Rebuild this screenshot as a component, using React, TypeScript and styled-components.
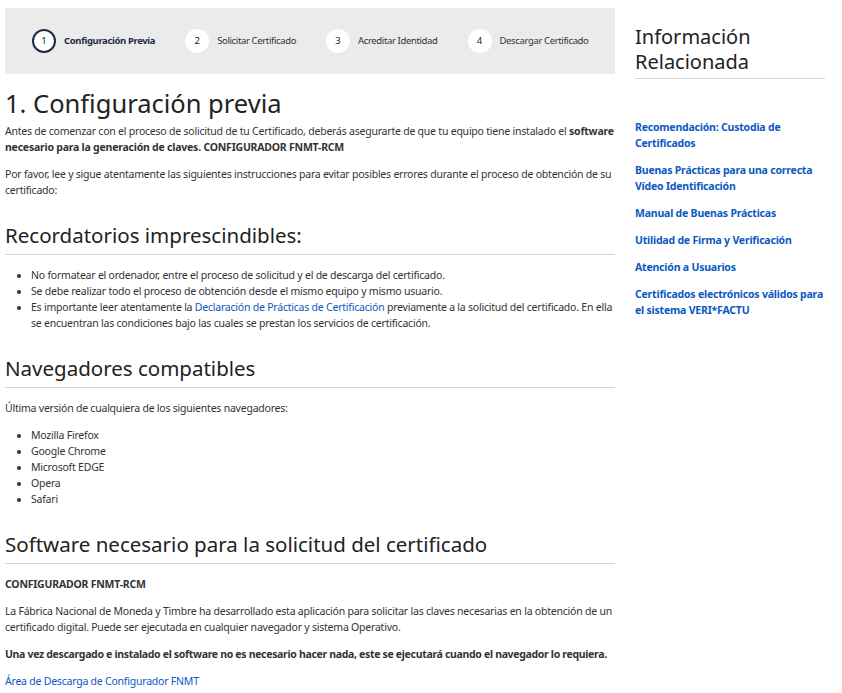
import { createGlobalStyle } from 'styled-components';
import styled from 'styled-components';

const GlobalStyle = createGlobalStyle`
  html, body {
    margin: 0;
    padding: 0;
    background: #fff;
  }
  body {
    font-family: "Noto Sans", "Open Sans", sans-serif;
    color: #333;
  }
`;

const steps = [
  { n: 1, label: 'Configuración Previa' },
  { n: 2, label: 'Solicitar Certificado' },
  { n: 3, label: 'Acreditar Identidad' },
  { n: 4, label: 'Descargar Certificado' },
];

const sideLinks = [
  'Recomendación: Custodia de Certificados',
  'Buenas Prácticas para una correcta Vídeo Identificación',
  'Manual de Buenas Prácticas',
  'Utilidad de Firma y Verificación',
  'Atención a Usuarios',
  'Certificados electrónicos válidos para el sistema VERI*FACTU',
];

const browsers = ['Mozilla Firefox', 'Google Chrome', 'Microsoft EDGE', 'Opera', 'Safari'];

const App = () => {
  return (
    <>
      <GlobalStyle />
      <Page>
        <Main>
          <Stepper>
            {steps.map((s) => (
              <Step key={s.n}>
                <StepCircle $active={s.n === 1}>{s.n}</StepCircle>
                <StepLabel $active={s.n === 1}>{s.label}</StepLabel>
              </Step>
            ))}
          </Stepper>

          <Title>1. Configuración previa</Title>
          <Para>
            Antes de comenzar con el proceso de solicitud de tu Certificado, deberás asegurarte de que tu equipo tiene
            instalado el <b>software necesario para la generación de claves. CONFIGURADOR FNMT-RCM</b>
          </Para>
          <Para>
            Por favor, lee y sigue atentamente las siguientes instrucciones para evitar posibles errores durante el
            proceso de obtención de su certificado:
          </Para>

          <SectionTitle>Recordatorios imprescindibles:</SectionTitle>
          <List>
            <li>No formatear el ordenador, entre el proceso de solicitud y el de descarga del certificado.</li>
            <li>Se debe realizar todo el proceso de obtención desde el mismo equipo y mismo usuario.</li>
            <li>
              Es importante leer atentamente la <Link href="#">Declaración de Prácticas de Certificación</Link>{' '}
              previamente a la solicitud del certificado. En ella se encuentran las condiciones bajo las cuales se
              prestan los servicios de certificación.
            </li>
          </List>

          <SectionTitle>Navegadores compatibles</SectionTitle>
          <Para>Última versión de cualquiera de los siguientes navegadores:</Para>
          <List>
            {browsers.map((b) => (
              <li key={b}>{b}</li>
            ))}
          </List>

          <SectionTitle>Software necesario para la solicitud del certificado</SectionTitle>
          <Para>
            <b>CONFIGURADOR FNMT-RCM</b>
          </Para>
          <Para>
            La Fábrica Nacional de Moneda y Timbre ha desarrollado esta aplicación para solicitar las claves necesarias
            en la obtención de un certificado digital. Puede ser ejecutada en cualquier navegador y sistema Operativo.
          </Para>
          <Para>
            <Strong>
              Una vez descargado e instalado el software no es necesario hacer nada, este se ejecutará cuando el
              navegador lo requiera.
            </Strong>
          </Para>
          <Para>
            <Link href="#">Área de Descarga de Configurador FNMT</Link>
          </Para>
        </Main>

        <Aside>
          <AsideTitle>Información Relacionada</AsideTitle>
          <SideList>
            {sideLinks.map((l) => (
              <SideLink key={l} href="#">
                {l}
              </SideLink>
            ))}
          </SideList>
        </Aside>
      </Page>
    </>
  );
};

const Page = styled.div`
  display: flex;
  align-items: flex-start;
  gap: 20px;
  padding: 8px 0 0 5px;
`;

const Main = styled.main`
  width: 610px;
  flex-shrink: 0;
  font-size: 10.5px;
  letter-spacing: -0.22px;
  line-height: 16px;
`;

const Stepper = styled.div`
  display: flex;
  align-items: center;
  height: 66px;
  padding-left: 27px;
  gap: 30px;
  background: #ebebeb;
`;

const Step = styled.div`
  display: flex;
  align-items: center;
  gap: 8px;
`;

const StepCircle = styled.span<{ $active?: boolean }>`
  display: flex;
  align-items: center;
  justify-content: center;
  width: 24px;
  height: 24px;
  box-sizing: border-box;
  border-radius: 50%;
  background: #fff;
  border: ${(p) => (p.$active ? '2px solid #1d2b45' : 'none')};
  font-size: 9.5px;
  letter-spacing: 0;
  color: #222;
`;

const StepLabel = styled.span<{ $active?: boolean }>`
  white-space: nowrap;
  font-size: 9.5px;
  letter-spacing: -0.36px;
  font-weight: ${(p) => (p.$active ? 700 : 400)};
  color: ${(p) => (p.$active ? '#1d2b45' : '#333')};
`;

const Title = styled.h1`
  margin: 14px 0 5px;
  font-size: 25.5px;
  line-height: 30px;
  font-weight: 400;
  letter-spacing: 0;
  color: #222;
`;

const Para = styled.p`
  margin: 0 0 11px;
`;

const Strong = styled.b`
  letter-spacing: -0.32px;
`;

const SectionTitle = styled.h2`
  margin: 24px 0 12px;
  padding-bottom: 6px;
  border-bottom: 1px solid #d6d6d6;
  font-size: 20.5px;
  line-height: 26px;
  font-weight: 400;
  letter-spacing: 0;
  color: #222;
`;

const List = styled.ul`
  margin: 0 0 12px;
  padding-left: 26px;
`;

const Link = styled.a`
  color: #0a58c2;
  text-decoration: none;
`;

const Aside = styled.aside`
  width: 190px;
  padding-top: 16px;
`;

const AsideTitle = styled.h3`
  margin: 0;
  padding-bottom: 4px;
  border-bottom: 1px solid #d6d6d6;
  font-size: 20px;
  line-height: 25px;
  font-weight: 400;
  color: #222;
`;

const SideList = styled.nav`
  display: flex;
  flex-direction: column;
  gap: 11px;
  margin-top: 40px;
`;

const SideLink = styled.a`
  font-size: 10.5px;
  letter-spacing: -0.2px;
  line-height: 16px;
  font-weight: 700;
  color: #0a58c2;
  text-decoration: none;
`;

export default App;
